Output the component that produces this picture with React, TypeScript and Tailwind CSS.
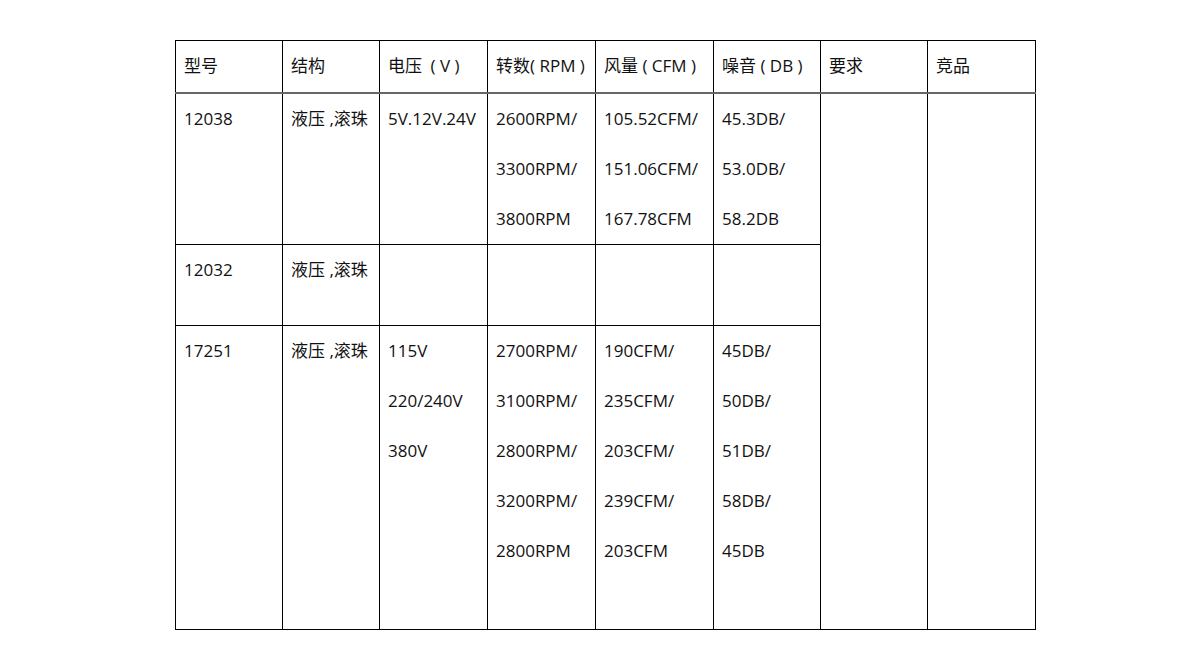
import React from 'react';

const font = { fontFamily: '"Open Sans", "Noto Sans CJK SC", sans-serif' };

function Lines({ items }: { items: string[] }) {
  return (
    <>
      {items.map((t, i) => (
        <div key={i} className="h-[50px] leading-[50px] whitespace-pre">
          {t}
        </div>
      ))}
    </>
  );
}

const headers = ['型号', '结构', '电压\u2002( V )', '转数( RPM )', '风量 ( CFM )', '噪音 ( DB )', '要求', '竞品'];
const widths = ['w-[107px]', 'w-[97px]', 'w-[108px]', 'w-[108px]', 'w-[118px]', 'w-[107px]', 'w-[107px]', 'w-[108px]'];

export default function App() {
  const td = 'border border-black align-top pl-[8px] pr-0 text-[17px] text-[#111]';
  return (
    <div className="w-[1200px] h-[669px] bg-white pt-[40px] pl-[175px]" style={font}>
      <table className="border-collapse table-fixed w-[861px]">
        <colgroup>
          {widths.map((w, i) => (
            <col key={i} className={w} />
          ))}
        </colgroup>
        <thead>
          <tr className="h-[52px]">
            {headers.map((h) => (
              <th key={h} className={`${td} font-normal text-left border-b-2 border-b-[#666]`}>
                <Lines items={[h]} />
              </th>
            ))}
          </tr>
        </thead>
        <tbody>
          <tr className="h-[152px]">
            <td className={td}><Lines items={['12038']} /></td>
            <td className={td}><Lines items={['液压 ,滚珠']} /></td>
            <td className={td}><Lines items={['5V.12V.24V']} /></td>
            <td className={td}><Lines items={['2600RPM/', '3300RPM/', '3800RPM']} /></td>
            <td className={td}><Lines items={['105.52CFM/', '151.06CFM/', '167.78CFM']} /></td>
            <td className={td}><Lines items={['45.3DB/', '53.0DB/', '58.2DB']} /></td>
            <td className={td} rowSpan={3}></td>
            <td className={td} rowSpan={3}></td>
          </tr>
          <tr className="h-[81px]">
            <td className={td}><Lines items={['12032']} /></td>
            <td className={td}><Lines items={['液压 ,滚珠']} /></td>
            <td className={td}></td>
            <td className={td}></td>
            <td className={td}></td>
            <td className={td}></td>
          </tr>
          <tr className="h-[304px]">
            <td className={td}><Lines items={['17251']} /></td>
            <td className={td}><Lines items={['液压 ,滚珠']} /></td>
            <td className={td}><Lines items={['115V', '220/240V', '380V']} /></td>
            <td className={td}><Lines items={['2700RPM/', '3100RPM/', '2800RPM/', '3200RPM/', '2800RPM']} /></td>
            <td className={td}><Lines items={['190CFM/', '235CFM/', '203CFM/', '239CFM/', '203CFM']} /></td>
            <td className={td}><Lines items={['45DB/', '50DB/', '51DB/', '58DB/', '45DB']} /></td>
          </tr>
        </tbody>
      </table>
    </div>
  );
}
